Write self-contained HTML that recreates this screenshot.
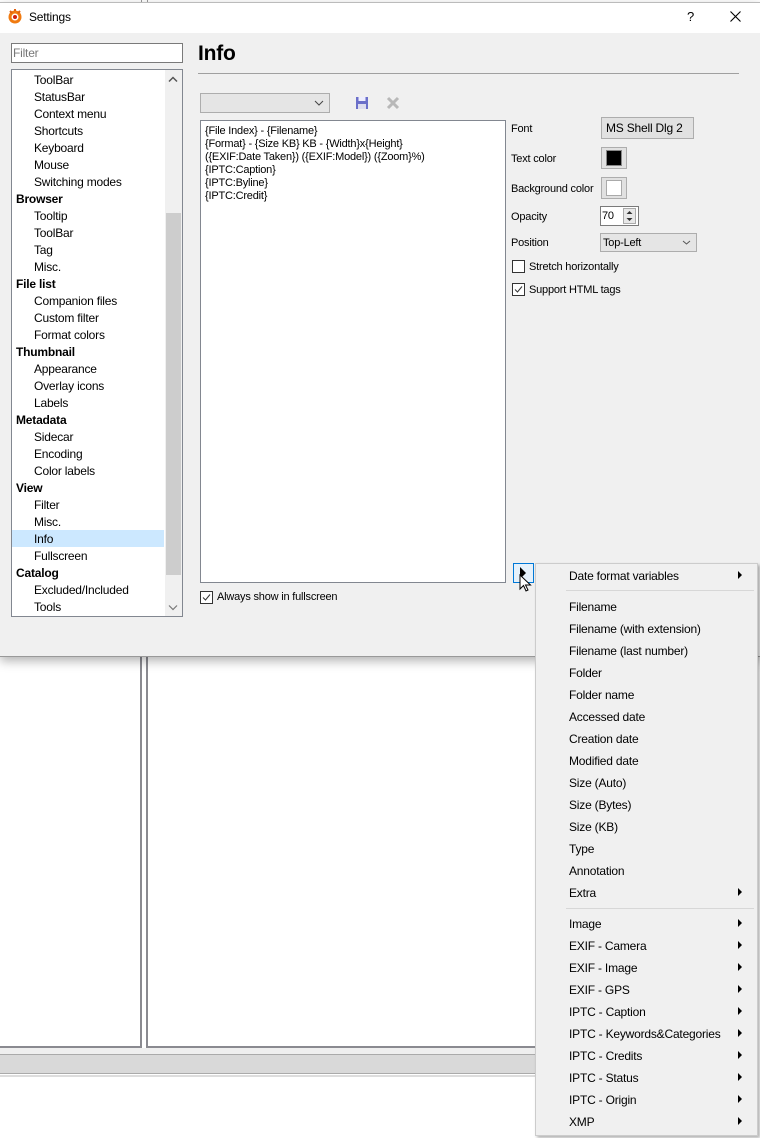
<!DOCTYPE html>
<html><head><meta charset="utf-8"><style>
*{box-sizing:border-box;margin:0;padding:0}
body{width:760px;height:1138px;background:#fff;position:relative;overflow:hidden;font-family:"Liberation Sans",sans-serif;font-size:12px;color:#000}
.a{position:absolute}
.t{position:absolute;white-space:nowrap;font-size:12px;letter-spacing:-0.2px}
</style></head><body>
<div class="a" style="left:0;top:655px;width:142px;height:393px;border-right:2px solid #8a8a90;border-bottom:2px solid #8a8a90;background:#fff"></div>
<div class="a" style="left:146px;top:655px;width:400px;height:393px;border-left:2px solid #8a8a90;border-bottom:2px solid #8a8a90;background:#fff"></div>
<div class="a" style="left:0;top:1048px;width:540px;height:6px;background:#efefef"></div>
<div class="a" style="left:0;top:1054px;width:540px;height:20px;background:#d9d9d9;border-top:1px solid #aaa;border-bottom:1px solid #aaa"></div>
<div class="a" style="left:0;top:1075px;width:540px;height:2px;background:#ddd"></div>
<div class="a" style="left:141px;top:0;width:1px;height:3px;background:#999"></div>
<div class="a" style="left:147px;top:0;width:1px;height:3px;background:#999"></div>
<div class="a" style="left:0;top:2px;width:760px;height:655px;background:#f0f0f0;border-top:1px solid #bbb;border-bottom:1px solid #999;box-shadow:0 4px 10px rgba(0,0,0,.3)"></div>
<div class="a" style="left:0;top:3px;width:760px;height:30px;background:#fff"></div>
<svg class="a" style="left:7px;top:8px" width="16" height="16" viewBox="0 0 16 16"><circle cx="8" cy="9" r="6.5" fill="#f07a10"/><path d="M3 3l2 2M13 3l-2 2M8 1v2" stroke="#e06010" stroke-width="2"/><circle cx="8" cy="9" r="3.5" fill="#fff"/><circle cx="8" cy="9" r="2" fill="#d02010"/></svg>
<div class="t" style="left:29px;top:10px;font-size:12px">Settings</div>
<div class="t" style="left:687px;top:9px;font-size:13px">?</div>
<svg class="a" style="left:730px;top:11px" width="11" height="11"><path d="M0.5 0.5l10 10M10.5 0.5l-10 10" stroke="#000" stroke-width="1.1"/></svg>
<div class="a" style="left:11px;top:43px;width:172px;height:20px;background:#fff;border:1px solid #7a7a7a"></div>
<div class="t" style="left:13px;top:46px;color:#777">Filter</div>
<div class="a" style="left:11px;top:69px;width:172px;height:548px;background:#fff;border:1px solid #828790"></div>
<div class="a" style="left:165px;top:70px;width:17px;height:546px;background:#f0f0f0"></div>
<div class="a" style="left:166px;top:213px;width:15px;height:362px;background:#cdcdcd"></div>
<svg class="a" style="left:168px;top:76px" width="10" height="7"><path d="M1 5.5l4-4 4 4" stroke="#555" stroke-width="1.5" fill="none"/></svg>
<svg class="a" style="left:168px;top:604px" width="10" height="7"><path d="M1 1.5l4 4 4-4" stroke="#777" stroke-width="1.2" fill="none"/></svg>
<div class="a" style="left:12px;top:530px;width:152px;height:17px;background:#cce8ff"></div>
<div class="t" style="left:34px;top:73px">ToolBar</div>
<div class="t" style="left:34px;top:90px">StatusBar</div>
<div class="t" style="left:34px;top:107px">Context menu</div>
<div class="t" style="left:34px;top:124px">Shortcuts</div>
<div class="t" style="left:34px;top:141px">Keyboard</div>
<div class="t" style="left:34px;top:158px">Mouse</div>
<div class="t" style="left:34px;top:175px">Switching modes</div>
<div class="t" style="left:16px;top:192px;font-weight:bold">Browser</div>
<div class="t" style="left:34px;top:209px">Tooltip</div>
<div class="t" style="left:34px;top:226px">ToolBar</div>
<div class="t" style="left:34px;top:243px">Tag</div>
<div class="t" style="left:34px;top:260px">Misc.</div>
<div class="t" style="left:16px;top:277px;font-weight:bold">File list</div>
<div class="t" style="left:34px;top:294px">Companion files</div>
<div class="t" style="left:34px;top:311px">Custom filter</div>
<div class="t" style="left:34px;top:328px">Format colors</div>
<div class="t" style="left:16px;top:345px;font-weight:bold">Thumbnail</div>
<div class="t" style="left:34px;top:362px">Appearance</div>
<div class="t" style="left:34px;top:379px">Overlay icons</div>
<div class="t" style="left:34px;top:396px">Labels</div>
<div class="t" style="left:16px;top:413px;font-weight:bold">Metadata</div>
<div class="t" style="left:34px;top:430px">Sidecar</div>
<div class="t" style="left:34px;top:447px">Encoding</div>
<div class="t" style="left:34px;top:464px">Color labels</div>
<div class="t" style="left:16px;top:481px;font-weight:bold">View</div>
<div class="t" style="left:34px;top:498px">Filter</div>
<div class="t" style="left:34px;top:515px">Misc.</div>
<div class="t" style="left:34px;top:532px">Info</div>
<div class="t" style="left:34px;top:549px">Fullscreen</div>
<div class="t" style="left:16px;top:566px;font-weight:bold">Catalog</div>
<div class="t" style="left:34px;top:583px">Excluded/Included</div>
<div class="t" style="left:34px;top:600px">Tools</div>
<div class="t" style="left:198px;top:42px;font-size:21px;font-weight:bold">Info</div>
<div class="a" style="left:198px;top:73px;width:541px;height:1px;background:#a0a0a0"></div>
<div class="a" style="left:200px;top:93px;width:130px;height:20px;background:#e5e5e5;border:1px solid #adadad"></div>
<svg class="a" style="left:314px;top:100px" width="10" height="6"><path d="M1 1l4 4 4-4" stroke="#444" fill="none"/></svg>
<svg class="a" style="left:355px;top:96px" width="14" height="14"><rect x="1" y="1" width="12" height="12" fill="#6b6fc9"/><rect x="3.5" y="1" width="7" height="4" fill="#eef"/><rect x="3" y="8" width="8" height="5" fill="#dde"/></svg>
<svg class="a" style="left:386px;top:96px" width="14" height="14"><path d="M2 2l10 10M12 2l-10 10" stroke="#b8b8b8" stroke-width="3"/></svg>
<div class="a" style="left:200px;top:120px;width:306px;height:463px;background:#fff;border:1px solid #828790"></div>
<div class="a" style="left:205px;top:125px;font-size:11px;line-height:13px;white-space:pre;letter-spacing:-0.2px">{File Index} - {Filename}
{Format} - {Size KB} KB - {Width}x{Height}
({EXIF:Date Taken}) ({EXIF:Model}) ({Zoom}%)
{IPTC:Caption}
{IPTC:Byline}
{IPTC:Credit}</div>
<div class="a" style="left:200px;top:591px;width:13px;height:13px;border:1px solid #333;background:#fff"></div>
<svg class="a" style="left:201px;top:592px" width="11" height="11"><path d="M2 5.5l2.5 2.5 4.5-5.5" stroke="#333" fill="none"/></svg>
<div class="t" style="left:217px;top:591px;font-size:11px">Always show in fullscreen</div>
<div class="t" style="left:511px;top:123px;font-size:11px">Font</div>
<div class="a" style="left:601px;top:117px;width:93px;height:22px;background:#e1e1e1;border:1px solid #adadad"></div>
<div class="t" style="left:606px;top:121px;font-size:12px">MS Shell Dlg 2</div>
<div class="t" style="left:511px;top:153px;font-size:11px">Text color</div>
<div class="a" style="left:601px;top:147px;width:26px;height:22px;background:#e1e1e1;border:1px solid #adadad"></div>
<div class="a" style="left:606px;top:150px;width:16px;height:16px;background:#000;border:1px solid #888"></div>
<div class="t" style="left:511px;top:183px;font-size:11px">Background color</div>
<div class="a" style="left:601px;top:177px;width:26px;height:22px;background:#e1e1e1;border:1px solid #adadad"></div>
<div class="a" style="left:606px;top:180px;width:16px;height:16px;background:#fff;border:1px solid #aaa"></div>
<div class="t" style="left:511px;top:211px;font-size:11px">Opacity</div>
<div class="a" style="left:600px;top:206px;width:39px;height:20px;background:#fff;border:1px solid #7a7a7a"></div>
<div class="t" style="left:602px;top:210px;font-size:11px">70</div>
<div class="a" style="left:623px;top:208px;width:13px;height:16px;background:#e8e8e8;border:1px solid #aaa"></div>
<svg class="a" style="left:625px;top:209px" width="9" height="14"><path d="M4.5 2l3 3h-6zM4.5 12l3-3h-6z" fill="#333"/></svg>
<div class="t" style="left:511px;top:237px;font-size:11px">Position</div>
<div class="a" style="left:600px;top:233px;width:97px;height:19px;background:#e5e5e5;border:1px solid #adadad"></div>
<div class="t" style="left:603px;top:237px;font-size:11px">Top-Left</div>
<svg class="a" style="left:682px;top:240px" width="9" height="5"><path d="M1 1l3.5 3 3.5-3" stroke="#555" fill="none"/></svg>
<div class="a" style="left:512px;top:260px;width:13px;height:13px;border:1px solid #333;background:#fff"></div>
<div class="t" style="left:529px;top:261px;font-size:11px">Stretch horizontally</div>
<div class="a" style="left:512px;top:283px;width:13px;height:13px;border:1px solid #333;background:#fff"></div>
<svg class="a" style="left:513px;top:284px" width="11" height="11"><path d="M2 5.5l2.5 2.5 4.5-5.5" stroke="#333" fill="none"/></svg>
<div class="t" style="left:529px;top:284px;font-size:11px">Support HTML tags</div>
<div class="a" style="left:513px;top:563px;width:21px;height:20px;background:#e5f1fb;border:1px solid #0078d7"></div>
<svg class="a" style="left:518px;top:566px" width="10" height="14"><path d="M2 1l6 6-6 6z" fill="#000"/></svg>
<svg class="a" style="left:519px;top:574px" width="14" height="20"><path d="M1 1v14l3.5-3.5 2.5 5.5 2-1-2.5-5h5z" fill="#fff" stroke="#000" stroke-width="1"/></svg>
<div class="a" style="left:535px;top:563px;width:223px;height:573px;background:#f0f0f0;border:1px solid #ccc;box-shadow:2px 2px 3px rgba(0,0,0,.3)"></div>
<div class="a" style="left:566px;top:590px;width:188px;height:1px;background:#d7d7d7"></div>
<div class="a" style="left:566px;top:908px;width:188px;height:1px;background:#d7d7d7"></div>
<div class="t" style="left:569px;top:569px">Date format variables</div>
<div class="t" style="left:569px;top:600px">Filename</div>
<div class="t" style="left:569px;top:622px">Filename (with extension)</div>
<div class="t" style="left:569px;top:644px">Filename (last number)</div>
<div class="t" style="left:569px;top:666px">Folder</div>
<div class="t" style="left:569px;top:688px">Folder name</div>
<div class="t" style="left:569px;top:710px">Accessed date</div>
<div class="t" style="left:569px;top:732px">Creation date</div>
<div class="t" style="left:569px;top:754px">Modified date</div>
<div class="t" style="left:569px;top:776px">Size (Auto)</div>
<div class="t" style="left:569px;top:798px">Size (Bytes)</div>
<div class="t" style="left:569px;top:820px">Size (KB)</div>
<div class="t" style="left:569px;top:842px">Type</div>
<div class="t" style="left:569px;top:864px">Annotation</div>
<div class="t" style="left:569px;top:886px">Extra</div>
<div class="t" style="left:569px;top:917px">Image</div>
<div class="t" style="left:569px;top:939px">EXIF - Camera</div>
<div class="t" style="left:569px;top:961px">EXIF - Image</div>
<div class="t" style="left:569px;top:983px">EXIF - GPS</div>
<div class="t" style="left:569px;top:1005px">IPTC - Caption</div>
<div class="t" style="left:569px;top:1027px">IPTC - Keywords&amp;Categories</div>
<div class="t" style="left:569px;top:1049px">IPTC - Credits</div>
<div class="t" style="left:569px;top:1071px">IPTC - Status</div>
<div class="t" style="left:569px;top:1093px">IPTC - Origin</div>
<div class="t" style="left:569px;top:1115px">XMP</div>
<svg class="a" style="left:737px;top:0" width="6" height="1138"><g fill="#000">
<path d="M1 571l4 4-4 4z"/><path d="M1 888l4 4-4 4z"/><path d="M1 919l4 4-4 4z"/><path d="M1 941l4 4-4 4z"/><path d="M1 963l4 4-4 4z"/><path d="M1 985l4 4-4 4z"/><path d="M1 1007l4 4-4 4z"/><path d="M1 1029l4 4-4 4z"/><path d="M1 1051l4 4-4 4z"/><path d="M1 1073l4 4-4 4z"/><path d="M1 1095l4 4-4 4z"/><path d="M1 1117l4 4-4 4z"/></g></svg>
</body></html>
